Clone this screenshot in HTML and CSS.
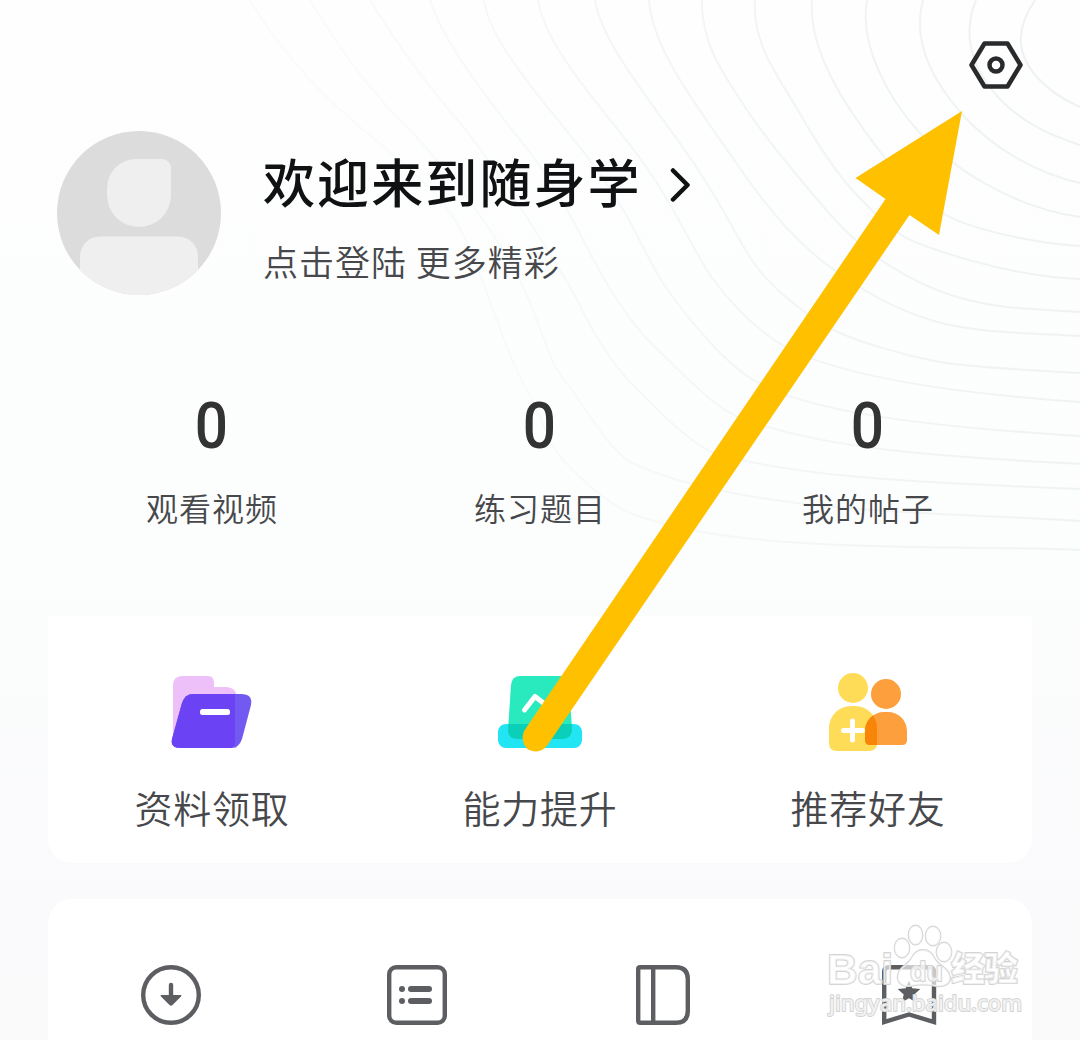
FILE: index.html
```html
<!DOCTYPE html>
<html lang="zh-CN">
<head>
<meta charset="utf-8">
<title>我的</title>
<link rel="stylesheet" href="styles.css">
</head>
<body>
<main class="page">
  <svg class="contours" viewBox="0 0 1080 600" aria-hidden="true">
    <defs>
      <linearGradient id="fade" gradientUnits="userSpaceOnUse" x1="1080" y1="60" x2="440" y2="300">
        <stop offset="0" stop-color="#eef1f2"/>
        <stop offset=".6" stop-color="#f3f6f6"/>
        <stop offset="1" stop-color="#f9fbfb"/>
      </linearGradient>
    </defs>
    <path d="M1035 0C1015 30 1017 53 1035 75Q1052 95 1080 107"/>
    <path d="M976 0C963 32 969 61 992 90S1046 134 1080 145"/>
    <path d="M923 0C912 40 932 80 962 114S1036 173 1080 183"/>
    <path d="M867 0C859 45 888 98 919 132S1010 207 1080 217"/>
    <path d="M812 0C808 50 845 106 879 150S920 200 944 214S1030 243 1080 246"/>
    <path d="M755 0C752 45 780 79 796 107S835 172 855 193S885 225 903 236S1010 277 1080 279"/>
    <path d="M702 0C701 45 725 76 745 107S825 211 849 234S910 282 954 296S1040 309 1080 312"/>
    <path d="M649 0C652 50 700 110 737 164S800 244 826 264S890 308 934 321S1040 333 1080 336"/>
    <path d="M595 0C602 46 660 112 697 168S740 247 760 271S810 318 834 330S900 354 934 361S1035 370 1080 373"/>
    <path d="M538 0C546 50 605 110 642 161S691 249 713 279S760 332 784 346C845 380 980 395 1080 402"/>
    <path d="M484 0C490 48 560 118 598 171S645 257 665 286S725 365 757 382C820 418 970 429 1080 436"/>
    <path d="M430 0C445 48 500 114 531 154S584 243 598 268S635 329 658 350S712 407 741 418C830 452 970 458 1080 464"/>
    <path d="M370 0C400 50 430 88 460 123S563 271 579 304S615 367 634 386S690 445 717 454C810 480 960 484 1080 489"/>
    <path d="M310 0C340 50 370 90 400 120S505 235 533 310S552 362 572 390S608 447 630 462C740 515 950 512 1080 521"/>
    <path d="M250 0C280 50 315 88 352 120S420 175 443 203S478 270 493 310S513 365 527 390S548 444 563 460S605 502 630 513C740 556 950 544 1080 550"/>
  </svg>

  <header class="topbar">
    <svg class="settings" viewBox="0 0 56 50">
      <path d="M16.500 3.500h23L52.500 25 39.500 46.500h-23L3.500 25z"/>
      <circle cx="28" cy="25" r="6.500"/>
    </svg>
  </header>

  <section class="profile">
    <svg class="avatar" viewBox="0 0 164 164">
      <defs><clipPath id="face"><circle cx="82" cy="82" r="82"/></clipPath></defs>
      <circle cx="82" cy="82" r="82" fill="#dcdcdc"/>
      <g clip-path="url(#face)" fill="#efefef">
        <path d="M79 28h26a9 9 0 0 1 9 9v27a32 32 0 0 1-64 0v-7a29 29 0 0 1 29-29z"/>
        <rect x="23" y="105.500" width="118" height="90" rx="20"/>
      </g>
    </svg>
    <div class="welcome">
      <div class="title-row">
        <h1 class="title">欢迎来到随身学</h1>
        <svg class="chevron" viewBox="0 0 22 36"><path d="M3 3.500 17.500 18 3 32.500"/></svg>
      </div>
      <p class="subtitle">点击登陆 更多精彩</p>
    </div>
  </section>

  <section class="stats">
    <div class="stat"><span class="count">0</span><span class="stat-label">观看视频</span></div>
    <div class="stat"><span class="count">0</span><span class="stat-label">练习题目</span></div>
    <div class="stat"><span class="count">0</span><span class="stat-label">我的帖子</span></div>
  </section>

  <section class="card actions">
    <div class="action">
      <svg class="action-icon" viewBox="5 0 90 90">
        <path fill="#edc0fa" d="M20 7h26q6 0 6 7v4h11q12 0 12 12v49H16q-5 0-5-5V17Q11 7 20 7z"/>
        <path fill="#7259f1" d="M31 25h48q12 0 10 11l-9 34q-3 9-11 9H19q-11 0-9-9l10-36q3-9 11-9z"/>
        <path fill="#6b43f4" d="M31 25h42v48q0 6-6 6H19q-11 0-9-9l10-36q3-9 11-9z"/>
        <rect x="38" y="40" width="30" height="6" rx="2.500" fill="#fff"/>
      </svg>
      <span class="action-label">资料领取</span>
    </div>
    <div class="action">
      <svg class="action-icon" viewBox="0 0 90 90">
        <rect x="3" y="55" width="84" height="24" rx="8" fill="#21e5f3"/>
        <path fill="#28eabe" d="M25 7h40q8 0 9 9l3 43q0 11-10 11H23q-10 0-10-9l3-45q1-9 9-9z"/>
        <path fill="#0ad0b9" d="M13.400 55h63.300l.3 4q0 11-10 11H23q-10 0-10-9z"/>
        <path d="M29.500 41 40 27.500 51 36 61 24" fill="none" stroke="#fff" stroke-width="5" stroke-linecap="round" stroke-linejoin="round"/>
      </svg>
      <span class="action-label">能力提升</span>
    </div>
    <div class="action">
      <svg class="action-icon" viewBox="1 0 90 90">
        <circle cx="31" cy="19" r="15" fill="#ffdc57"/>
        <path fill="#ffdc57" d="M7 60a22 22 0 0 1 22-23h4a22 22 0 0 1 22 23v14q0 8-8 8H15q-8 0-8-8z"/>
        <circle cx="64" cy="25" r="15" fill="#fc9f3c"/>
        <path fill="#fc9f3c" d="M43 62a19 19 0 0 1 19-19h4a19 19 0 0 1 19 19v9q0 5-5 5H48q-5 0-5-5z"/>
        <path d="M30.500 52v19M21.500 61.500h19" stroke="#fff" stroke-width="5" stroke-linecap="round"/>
        <path fill="#f98508" d="M51 46.600Q55 52 55 60v16h-7q-5 0-5-5v-9q0-10 8-15.400z"/>
      </svg>
      <span class="action-label">推荐好友</span>
    </div>
  </section>

  <section class="card tools">
    <div class="tool">
      <svg class="tool-icon" viewBox="0 0 60 60">
        <circle cx="30" cy="30" r="27.800"/>
        <path d="M30 20v13"/>
        <path class="solid" d="M20.500 30h19q2 0 .5 1.500l-8.500 8.500q-1.500 1.500-3 0L20 31.500Q18.500 30 20.500 30z"/>
      </svg>
    </div>
    <div class="tool">
      <svg class="tool-icon" viewBox="0 0 60 60">
        <rect x="2.200" y="2.200" width="55.600" height="55.600" rx="7"/>
        <g class="solid"><circle cx="15" cy="24" r="3"/><circle cx="15" cy="36" r="3"/><rect x="21" y="21" width="24" height="6" rx="3"/><rect x="21" y="33" width="24" height="6" rx="3"/></g>
      </svg>
    </div>
    <div class="tool">
      <svg class="tool-icon" viewBox="0 0 60 60">
        <path d="M7.200 2.200H43q11.800 0 11.800 12v31.600q0 12-11.800 12H7.200q-2 0-2-2V4.200q0-2 2-2zM20.200 2v56"/>
      </svg>
    </div>
    <div class="tool">
      <svg class="tool-icon" viewBox="0 0 60 60">
        <path class="ribbon" d="M10 2.200h40.500q4.500 0 4.500 4.500v50.300L30 49.500 5.200 57V6.700q0-4.500 4.800-4.500z"/>
        <path class="solid" d="M30 16l3.300 7.300 8 .8-6 5.300 1.700 7.800-7-4-7 4 1.700-7.800-6-5.300 8-.8z"/>
      </svg>
    </div>
  </section>

  <svg class="watermark" viewBox="0 0 210 110">
    <g class="mark">
      <path d="M103 30q8 0 12 9c4 7 14 9 15 18 1 8-8 10-14 9q-13-3-26 0c-8 1-14-4-12-12 2-7 9-9 13-15q4-9 12-9z"/>
      <ellipse cx="82" cy="28" rx="7.500" ry="9.500"/>
      <ellipse cx="95.500" cy="15" rx="7" ry="9.500"/>
      <ellipse cx="113" cy="16" rx="7.500" ry="9.500"/>
      <ellipse cx="124" cy="32" rx="7.500" ry="9.500"/>
      <text class="latin" x="7" y="64" textLength="66" lengthAdjust="spacingAndGlyphs">Bai</text>
      <text class="inner" x="90" y="61" textLength="33" lengthAdjust="spacingAndGlyphs">du</text>
      <text class="hanzi" x="131" y="61" textLength="67">经验</text>
      <text class="site" x="9" y="91" textLength="193">jingyan.baidu.com</text>
    </g>
  </svg>

  <svg class="pointer" viewBox="0 0 1080 1040">
    <path d="M962 111 939 235 909.500 215 547.500 745Q540 755 528 749.500Q520 742 524 731L885.500 199 855.500 178z"/>
  </svg>
</main>
</body>
</html>
```
FILE: styles.css
```css
* { box-sizing: border-box; }

body {
  margin: 0;
  font-family: "Noto Sans CJK SC", sans-serif;
}

.page {
  position: relative;
  width: 1080px;
  height: 1040px;
  overflow: hidden;
  background: linear-gradient(#fefefe, #fcfdfd 55%, #fafafc 85%, #fafafb);
}

.page svg { display: block; }

.contours {
  position: absolute;
  inset: 0 0 auto;
  width: 1080px;
  height: 600px;
  fill: none;
  stroke: url(#fade);
  stroke-width: 2;
}

.topbar {
  position: relative;
  display: flex;
  justify-content: flex-end;
  height: 131px;
  padding: 40px 56px 0 0;
}

.settings {
  width: 56px;
  height: 50px;
  fill: none;
  stroke: #292a2c;
  stroke-width: 4.500;
  stroke-linejoin: round;
}

.profile {
  position: relative;
  display: flex;
  gap: 42px;
  height: 260px;
  padding-left: 57px;
}

.avatar {
  width: 164px;
  height: 164px;
}

.welcome { padding-top: 15px; }

.title-row {
  display: flex;
  align-items: center;
  gap: 28px;
  height: 70px;
}

.title {
  margin: 0;
  font-size: 52px;
  font-weight: 500;
  line-height: 70px;
  letter-spacing: 2.1px;
  color: #101113;
}

.chevron {
  width: 22px;
  height: 36px;
  margin-top: 8px;
  fill: none;
  stroke: #101113;
  stroke-width: 4.500;
  stroke-linecap: round;
  stroke-linejoin: round;
}

.subtitle {
  margin: 20px 0 0;
  font-size: 35px;
  font-weight: 350;
  line-height: 50px;
  letter-spacing: 1px;
  color: #47484b;
}

.stats {
  position: relative;
  display: grid;
  grid-template-columns: repeat(3, 1fr);
  height: 225px;
  margin: 0 48px;
}

.stat {
  display: flex;
  flex-direction: column;
  align-items: center;
}

.count {
  height: 70px;
  margin-right: 2px;
  font-family: Roboto, sans-serif;
  font-size: 65px;
  font-weight: 500;
  line-height: 70px;
  color: #333;
  transform: scaleX(.9);
}

.stat-label {
  margin-top: 22px;
  font-size: 32px;
  font-weight: 350;
  line-height: 48px;
  letter-spacing: 1px;
  color: #47484b;
}

.card {
  position: relative;
  display: grid;
  margin: 0 48px;
  background: #fff;
}

.actions {
  grid-template-columns: repeat(3, 1fr);
  height: 247px;
  border-radius: 0 0 24px 24px;
}

.action {
  display: flex;
  flex-direction: column;
  align-items: center;
  padding-top: 53px;
}

.action-icon {
  width: 90px;
  height: 90px;
}

.action-label {
  margin-top: 20px;
  font-size: 38px;
  font-weight: 350;
  line-height: 56px;
  letter-spacing: .8px;
  color: #47484b;
}

.tools {
  grid-template-columns: repeat(4, 1fr);
  height: 240px;
  margin-top: 36px;
  padding-top: 66px;
  border-radius: 24px;
}

.tool {
  display: flex;
  justify-content: center;
  align-items: flex-start;
}

.tool-icon {
  width: 60px;
  height: 60px;
  fill: none;
  stroke: #5d5e62;
  stroke-width: 4.400;
  stroke-linecap: round;
}

.tool-icon .solid {
  fill: #5d5e62;
  stroke: none;
}

.watermark {
  position: absolute;
  left: 820px;
  top: 920px;
  width: 210px;
  height: 110px;
}

.mark {
  fill: rgba(255, 255, 255, .65);
  stroke: #d4d4d4;
  stroke-width: 1.800;
  stroke-linejoin: round;
  paint-order: stroke;
}

.latin {
  font: 700 43px "Liberation Sans", sans-serif;
}

.inner {
  font: 700 28px "Liberation Sans", sans-serif;
}

.hanzi {
  font: 900 34px "Noto Sans CJK SC", sans-serif;
}

.site {
  font: 500 22px "Noto Sans", sans-serif;
}

.pointer {
  position: absolute;
  inset: 0;
  width: 1080px;
  height: 1040px;
  fill: #ffc000;
}
```
